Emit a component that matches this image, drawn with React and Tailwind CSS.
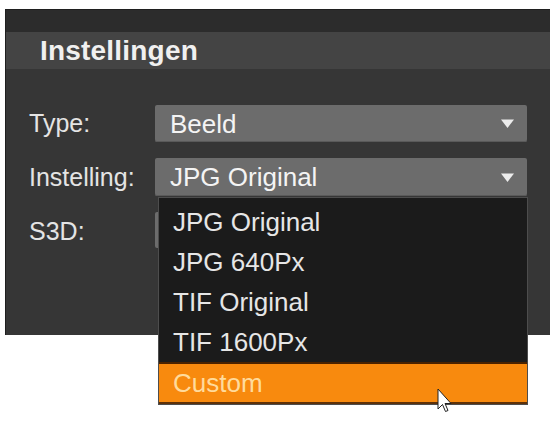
import React from "react";

function Arrow() {
  return (
    <svg width="15" height="11" viewBox="0 0 15 11" className="shrink-0">
      <path d="M1 1.5 L14 1.5 L7.5 10 Z" fill="#ececec" />
    </svg>
  );
}

function Select({ value }) {
  return (
    <div className="flex h-full min-w-0 flex-1 items-center justify-between rounded-[2px] bg-[#6c6c6c] pl-[15px] pr-[12px] shadow-[inset_0_-1px_0_#5a5a5a]">
      <span className="text-[26px] leading-none text-[#f4f4f4]">{value}</span>
      <Arrow />
    </div>
  );
}

export default function App() {
  const items = ["JPG Original", "JPG 640Px", "TIF Original", "TIF 1600Px"];
  return (
    <div
      className="relative h-[423px] w-[550px] overflow-hidden bg-white pl-[5px] pt-[9px]"
      style={{ fontFamily: '"Liberation Sans", Arial, sans-serif' }}
    >
      <div className="relative h-[326px] w-[545px] border-l border-t border-[#1f1f1f] bg-[#363636]">
        <div className="h-[22px] bg-[#2c2c2c]" />
        <div className="flex h-[37px] items-center bg-[#444444] pl-[34px]">
          <span className="text-[28px] font-bold leading-none tracking-[0.2px] text-[#f0f0f0]">
            Instellingen
          </span>
        </div>
        <div className="flex flex-col gap-[16px] pl-[23px] pr-[23px] pt-[36px]">
          <div className="flex h-[37px] items-center">
            <span className="w-[126px] shrink-0 text-[25px] leading-none text-[#e4e4e4]">Type:</span>
            <Select value="Beeld" />
          </div>
          <div className="flex h-[38px] items-center">
            <span className="w-[126px] shrink-0 text-[25px] leading-none text-[#e4e4e4]">Instelling:</span>
            <Select value="JPG Original" />
          </div>
          <div className="flex h-[36px] items-start">
            <span className="w-[126px] shrink-0 pt-[7px] text-[25px] leading-none text-[#e4e4e4]">S3D:</span>
            <div className="h-full flex-1 rounded-[2px] bg-[#6c6c6c]" />
          </div>
        </div>

        <div className="absolute left-[152px] top-[187px] w-[370px] border border-[#4d4d4d] bg-[#1b1b1b] pt-[4px]">
          {items.map((t) => (
            <div key={t} className="flex h-[40px] items-center pl-[14px]">
              <span className="text-[26px] leading-none text-[#e6e6e6]">{t}</span>
            </div>
          ))}
          <div className="h-[2px] bg-[#4a2200]" />
          <div className="flex h-[40px] items-center border-b-2 border-[#5e3108] bg-[#f88a0e] pl-[14px]">
            <span className="text-[26px] leading-none text-[#ffdb9c]">Custom</span>
          </div>
        </div>
      </div>

      <svg
        className="absolute left-[434px] top-[388px]"
        width="18"
        height="28"
        viewBox="0 0 18 28"
      >
        <path
          d="M4 1 L4 21 L8.5 16.5 L11.5 23.5 L14 22.5 L11 15.5 L17 15.5 Z"
          fill="#ffffff"
          stroke="#222"
          strokeWidth="1"
          strokeLinejoin="round"
        />
      </svg>
    </div>
  );
}
